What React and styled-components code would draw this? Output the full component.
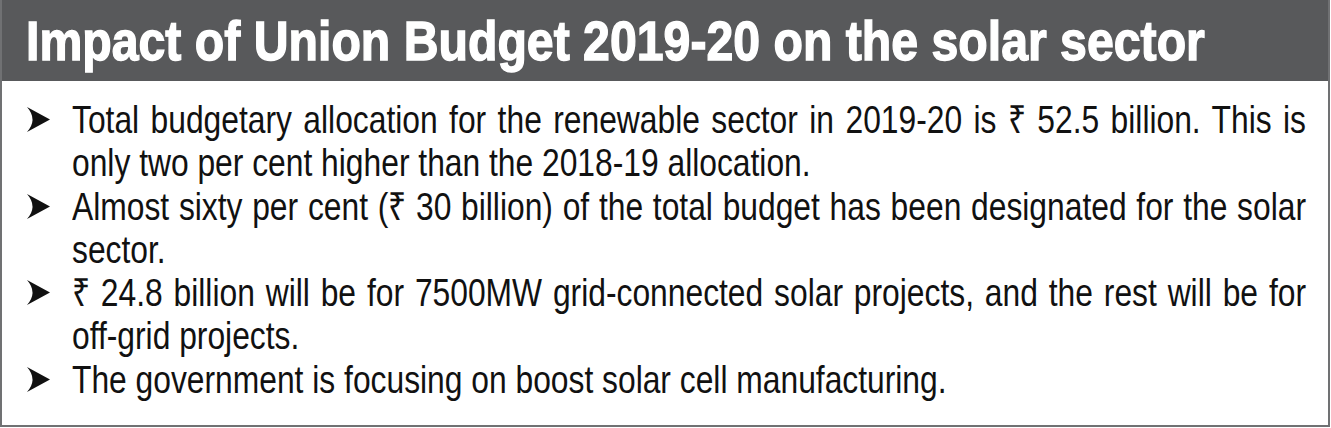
import React from "react";
import styled, { createGlobalStyle } from "styled-components";

const GlobalStyle = createGlobalStyle`
  html, body {
    margin: 0;
    padding: 0;
    background: #fff;
  }
`;

// no condensed face installed, so Liberation Sans is squeezed horizontally
const TITLE_SQUEEZE = 0.861;
const BODY_SQUEEZE = 0.815;

const points = [
  "Total budgetary allocation for the renewable sector in 2019-20 is \u20B9 52.5 billion. This is only two per cent higher than the 2018-19 allocation.",
  "Almost sixty per cent (\u20B9 30 billion) of the total budget has been designated for the solar sector.",
  "\u20B9 24.8 billion will be for 7500MW grid-connected solar projects, and the rest will be for off-grid projects.",
  "The government is focusing on boost solar cell manufacturing.",
];

function Arrow() {
  return (
    <ArrowIcon viewBox="0 0 23 25" aria-hidden="true">
      <path d="M0 0 L23 12.5 L0 25 Q11 12.5 0 0 Z" fill="#111" />
    </ArrowIcon>
  );
}

function App() {
  return (
    <>
      <GlobalStyle />
      <Box>
        <Header>
          <Title $squeeze={TITLE_SQUEEZE}>
            Impact of Union Budget 2019-20 on the solar sector
          </Title>
        </Header>
        <List>
          {points.map((p, i) => (
            <Item key={i}>
              <Arrow />
              <TextSlot>
                <ItemText $squeeze={BODY_SQUEEZE}>{p}</ItemText>
              </TextSlot>
            </Item>
          ))}
        </List>
      </Box>
    </>
  );
}

const Box = styled.div`
  box-sizing: border-box;
  width: 1330px;
  height: 427px;
  border: 2px solid #707173;
  border-top: none;
  background: #fff;
  overflow: hidden;
`;

const Header = styled.div`
  height: 81px;
  background: #58595b;
  display: flex;
  align-items: center;
  padding-left: 24px;
`;

const Title = styled.h1`
  margin: 0;
  color: #fff;
  -webkit-text-stroke: 1.4px #fff;
  font-family: "Liberation Sans", Arial, sans-serif;
  font-weight: 700;
  font-size: 56px;
  line-height: 56px;
  white-space: nowrap;
  transform: scaleX(${(p) => p.$squeeze});
  transform-origin: left center;
`;

const List = styled.ul`
  list-style: none;
  margin: 0;
  padding: 17px 22px 0 25px;
`;

const Item = styled.li`
  display: flex;
  align-items: flex-start;
`;

const ArrowIcon = styled.svg`
  flex: none;
  width: 23px;
  height: 25px;
  margin-top: 9px;
  margin-right: 22px;
`;

const TextSlot = styled.div`
  flex: 1;
  min-width: 0;
`;

const ItemText = styled.p`
  margin: 0;
  width: calc(100% / ${(p) => p.$squeeze});
  transform: scaleX(${(p) => p.$squeeze});
  transform-origin: left top;
  text-align: justify;
  font-family: "Liberation Sans", Arial, sans-serif;
  font-size: 39px;
  line-height: 43.3px;
  color: #111;
`;

export default App;
